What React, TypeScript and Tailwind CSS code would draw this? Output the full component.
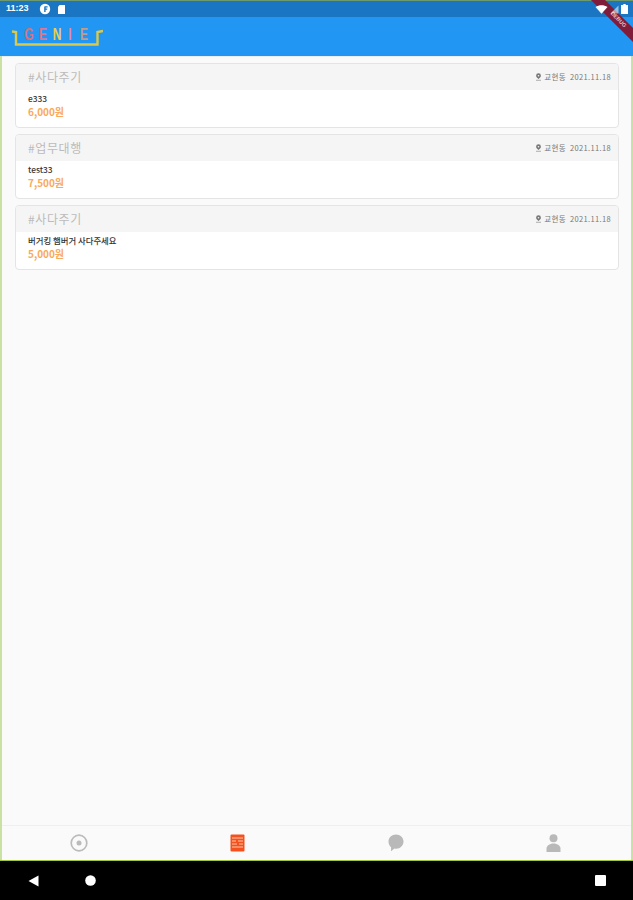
const font = { fontFamily: '"Noto Sans CJK KR", "Noto Sans", sans-serif' };

const posts = [
  { tag: "#사다주기", title: "e333", price: "6,000원" },
  { tag: "#업무대행", title: "test33", price: "7,500원" },
  { tag: "#사다주기", title: "버거킹 햄버거 사다주세요", price: "5,000원" },
];

const letters = [
  { ch: "G", cls: "text-[#cf7578]" },
  { ch: "E", cls: "text-[#dc7892]" },
  { ch: "N", cls: "text-[#e6d050]" },
  { ch: "I", cls: "text-[#e08a95]" },
  { ch: "E", cls: "text-[#c39c88]" },
];

function Pin() {
  return (
    <svg width="7" height="8" viewBox="0 0 7 8" className="mr-[2px]">
      <path d="M3.500 0.300a2.400 2.400 0 0 1 2.400 2.400c0 1.300-1.400 2.300-2.400 3.200C2.500 5 1.100 4 1.100 2.700A2.400 2.400 0 0 1 3.500.3z" fill="#777" />
      <circle cx="3.500" cy="2.700" r="0.800" fill="#f5f5f5" />
      <rect x="1" y="6.800" width="5" height="0.800" fill="#999" />
    </svg>
  );
}

function Card({ tag, title, price }: { tag: string; title: string; price: string }) {
  return (
    <div className="h-[65px] rounded-[4px] border border-[#e4e4e4] bg-white overflow-hidden">
      <div className="h-[26px] bg-[#f5f5f5] pl-[12px] pr-[7px] flex items-center justify-between">
        <span className="text-[12px] text-[#bbbbbb] tracking-[0.6px]">{tag}</span>
        <span className="flex items-center text-[7.5px] text-[#777] tracking-[0.35px]">
          <Pin />
          교현동&nbsp;&nbsp;2021.11.18
        </span>
      </div>
      <div className="pl-[12px] pt-[3px]">
        <div className="text-[8.400px] leading-[11px] font-medium text-[#333]">{title}</div>
        <div className="text-[10px] leading-[15px] font-bold text-[#f9a95a]">{price}</div>
      </div>
    </div>
  );
}

export default function App() {
  return (
    <div className="relative w-[633px] h-[900px] overflow-hidden flex flex-col bg-[#fafafa]" style={font}>
      <div className="h-[1px] bg-[#6f9a6d]" />
      <div className="h-[16px] bg-[#1a76c2] flex items-center justify-between pl-[6px] pr-[5px] shrink-0">
        <div className="flex items-center">
          <span className="text-[9px] font-bold text-white w-[33px]" style={{ fontFamily: '"Liberation Sans", sans-serif' }}>11:23</span>
          <svg width="12" height="12" viewBox="0 0 12 12">
            <circle cx="6" cy="6" r="5.200" fill="#fff" />
            <path d="M6 3.200h2.600v1.300H6.600v1h1.600v1.200H6.600V9H5.200V4.200A1 1 0 0 1 6 3.200z" fill="#1a76c2" />
          </svg>
          <svg width="9" height="11" viewBox="0 0 9 11" className="ml-[6px]">
            <path d="M2.600 1H8v9H1V2.800z" fill="#fff" />
          </svg>
        </div>
      </div>
      <div className="h-[39px] bg-[#2196f3] shrink-0 pl-[12px] pt-[10px]">
        <div className="relative w-[91px] h-[20px]">
          <svg width="91" height="20" viewBox="0 0 91 20" className="absolute left-0 top-0">
            <path d="M0 4.500L4 5V17.500H85.500V5L91 4" fill="none" stroke="#dcc94a" strokeWidth="2.400" />
          </svg>
          <div className="relative flex justify-between pl-[13px] pr-[15px] text-[16px] leading-[16px] font-bold" style={{ fontFamily: '"Liberation Sans", sans-serif' }}>
            {letters.map((l, i) => (
              <span key={i} className={`w-[8px] flex justify-center scale-x-75 ${l.cls}`}>
                {l.ch}
              </span>
            ))}
          </div>
        </div>
      </div>
      <div className="flex-1 border-x-[2px] border-[#c9e2a4] flex flex-col min-h-0">
        <div className="flex-1 pt-[6px] pl-[13px] pr-[12px] flex flex-col gap-[6px] border-t-[1px] border-[#e9eef0]">
          {posts.map((p, i) => (
            <Card key={i} {...p} />
          ))}
        </div>
        <nav className="h-[35px] shrink-0 border-t border-[#efefef] pb-[1px] flex items-center">
          <div className="-mx-[2px] flex-1 grid grid-cols-4 items-center">
            <div className="flex justify-center">
              <svg width="18" height="18" viewBox="0 0 18 18">
                <circle cx="9" cy="9" r="7.800" fill="none" stroke="#bbbbbb" strokeWidth="1.700" />
                <circle cx="9" cy="9" r="2.500" fill="#bbbbbb" />
              </svg>
            </div>
            <div className="flex justify-center">
              <svg width="15" height="18" viewBox="0 0 15 18">
                <rect x="0.500" y="0.500" width="14" height="17" rx="1" fill="#f4511e" />
                <path d="M2 4h11M2 7h4M8 7h5M2 10h5M9 10h4M2 13h11" stroke="#ffc9a8" strokeWidth="1" />
              </svg>
            </div>
            <div className="flex justify-center">
              <svg width="16" height="18" viewBox="0 0 16 18">
                <path d="M8 0.500C12.200 0.500 15.500 3.500 15.500 7.500s-3.200 7.200-7.300 7.200c-.6 0-1.200-.1-1.700-.2L3 17.300l.1-4C1.500 12 .5 9.800.5 7.500.5 3.500 3.800.5 8 .5z" fill="#b9b9b9" />
              </svg>
            </div>
            <div className="flex justify-center">
              <svg width="15" height="18" viewBox="0 0 15 18">
                <circle cx="7.500" cy="4.300" r="4" fill="#b9b9b9" />
                <path d="M0.500 18v-3.500C0.500 12 3.500 9.500 7.500 9.500s7 2.500 7 5V18z" fill="#b9b9b9" />
              </svg>
            </div>
          </div>
        </nav>
      </div>
      <div className="h-[1px] bg-[#a4c639] shrink-0" />
      <div className="h-[39px] bg-black shrink-0 grid grid-cols-3 items-center">
        <div className="pl-[28px]">
          <svg width="11" height="12" viewBox="0 0 11 12">
            <path d="M10.500 0.500v11L0.500 6z" fill="#fff" />
          </svg>
        </div>
        <div className="-ml-[126px]">
          <svg width="11" height="11" viewBox="0 0 11 11">
            <circle cx="5.500" cy="5.500" r="5.300" fill="#fff" />
          </svg>
        </div>
        <div className="flex justify-end pr-[27px]">
          <div className="w-[11px] h-[11px] rounded-[1px] bg-white" />
        </div>
      </div>
      <div className="absolute right-[-20px] top-[15px] w-[70px] h-[10px] bg-[#7f1d3a] rotate-45 flex items-center justify-center">
        <span className="text-[5.500px] text-[#e0c2ca] leading-none font-bold" style={{ fontFamily: '"Liberation Sans", sans-serif' }}>DEBUG</span>
      </div>
      <div className="absolute top-[4px] right-[5px] flex items-center gap-[2px]">
        <svg width="13" height="9" viewBox="0 0 13 9">
          <path d="M0.500 2C4-0.500 9-0.500 12.500 2L6.500 8.700z" fill="#fff" />
        </svg>
        <svg width="9" height="9" viewBox="0 0 9 9">
          <path d="M8.500 0.500v8H0.500z" fill="#fff" fillOpacity="0.55" />
        </svg>
        <svg width="7" height="10" viewBox="0 0 7 10">
          <path d="M2.300 0h2.400v1H7v9H0V1h2.300z" fill="#fff" />
        </svg>
      </div>
    </div>
  );
}
